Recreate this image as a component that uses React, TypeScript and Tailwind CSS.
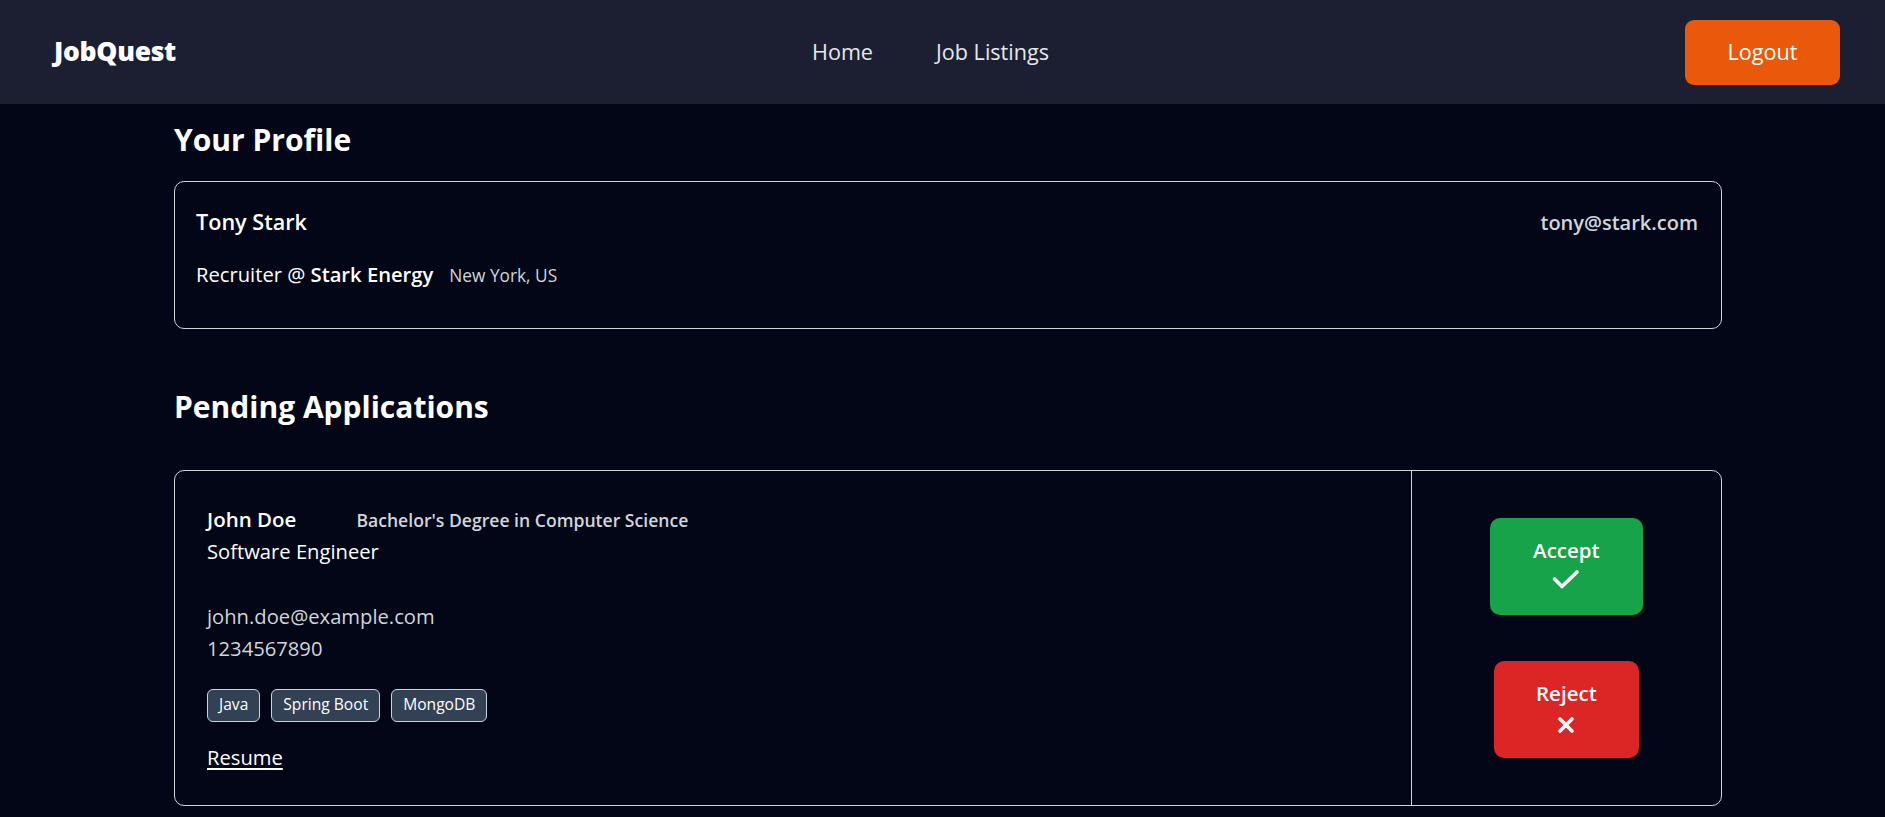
const tags = ["Java", "Spring Boot", "MongoDB"];

const App = () => {
  return (
    <div className="min-h-screen bg-[#020617] text-white font-['Open_Sans',sans-serif]">
      <nav className="h-[104px] bg-[#1c1f31] flex items-center justify-between pl-[54px] pr-[45px]">
        <span className="text-[26.5px] font-extrabold tracking-[-0.3px]">JobQuest</span>
        <div className="flex gap-[63px] text-[21.6px] font-medium text-gray-200">
          <a href="#">Home</a>
          <a href="#">Job Listings</a>
        </div>
        <button className="w-[155px] h-[65px] rounded-[9px] bg-[#ea580c] text-[21.6px] font-medium">Logout</button>
      </nav>

      <main className="ml-[174px] w-[1548px] pb-10">
        <h2 className="mt-[17px] text-[30px] leading-[38.4px] font-bold">Your Profile</h2>
        <div className="mt-[22px] border border-gray-300 rounded-[10px] pl-[21px] pr-[23px] pt-[23px] pb-[35px]">
          <div className="flex justify-between items-baseline leading-[33.6px]">
            <span className="text-[21.6px] font-semibold">Tony Stark</span>
            <span className="text-[20px] font-semibold text-gray-300">tony@stark.com</span>
          </div>
          <div className="mt-[18px] flex items-baseline leading-[33.6px]">
            <span className="text-[20.2px]">
              Recruiter @ <span className="font-semibold">Stark Energy</span>
            </span>
            <span className="ml-[16px] text-[17.3px] text-gray-300">New York, US</span>
          </div>
        </div>

        <h2 className="mt-[59px] text-[30px] leading-[38.4px] font-bold">Pending Applications</h2>
        <div className="mt-[44px] border border-gray-300 rounded-[10px] flex">
          <div className="w-4/5 border-r border-gray-300 pl-[32px] pt-[33px] pb-[31px]">
            <div className="flex items-baseline h-[31px] leading-[31px]">
              <span className="text-[20.5px] font-semibold">John Doe</span>
              <span className="ml-[60px] text-[17.6px] font-semibold text-gray-300">Bachelor's Degree in Computer Science</span>
            </div>
            <div className="text-[20.2px] leading-[33.6px]">Software Engineer</div>
            <div className="mt-[31px] text-[20.2px] leading-[32px] text-gray-300">
              <div>john.doe@example.com</div>
              <div>1234567890</div>
            </div>
            <div className="mt-[25px] flex gap-[11px]">
              {tags.map((t) => (
                <span key={t} className="bg-[#334155] border border-slate-300 rounded-[6px] px-[11px] h-[33px] flex items-center text-[15.6px]">
                  {t}
                </span>
              ))}
            </div>
            <a href="#" className="mt-[19px] block w-fit text-[20.2px] leading-[33.6px] font-medium underline underline-offset-[3px]">
              Resume
            </a>
          </div>
          <div className="w-1/5 flex flex-col items-center justify-evenly">
            <button className="w-[153px] h-[97px] rounded-[10px] bg-[#16a34a] flex flex-col items-center pt-[16px]">
              <span className="text-[20.5px] font-semibold leading-[33.6px]">Accept</span>
              <svg width="32" height="26" viewBox="0 0 32 26" fill="none" stroke="white" strokeWidth="3.6" strokeLinecap="round" strokeLinejoin="round">
                <path d="M4.5 12 L12 19.5 L27 5" />
              </svg>
            </button>
            <button className="w-[145px] h-[97px] rounded-[10px] bg-[#dc2626] flex flex-col items-center pt-[16px]">
              <span className="text-[20.5px] font-semibold leading-[33.6px]">Reject</span>
              <svg width="20" height="26" viewBox="0 0 20 26" fill="none" stroke="white" strokeWidth="3.6" strokeLinecap="round">
                <path d="M4 8 L16 20 M16 8 L4 20" />
              </svg>
            </button>
          </div>
        </div>
      </main>
    </div>
  );
};

export default App;
